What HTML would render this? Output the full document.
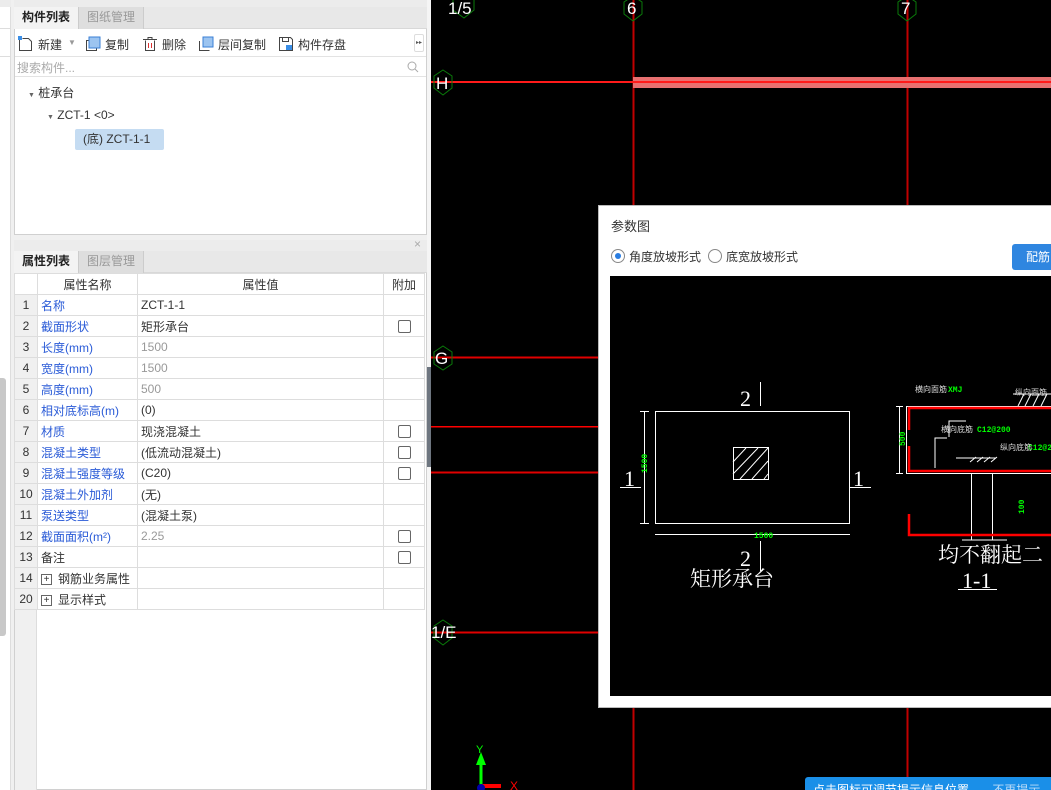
<!DOCTYPE html>
<html><head><meta charset="utf-8">
<style>
*{margin:0;padding:0;box-sizing:border-box}
body{width:1051px;height:790px;overflow:hidden;background:#f0f0f0;font-family:"Liberation Sans","Noto Sans CJK SC",sans-serif;font-size:12px;color:#333;position:relative}
.abs{position:absolute}
.tabs{position:absolute;left:14px;height:22px;width:413px;background:#e8e8e8;border-bottom:1px solid #d8d8d8}
.tab{position:absolute;top:0;height:22px;line-height:21px;text-align:center;font-size:12px}
.tab.on{background:#f3f3f3;font-weight:bold;color:#222;border-right:1px solid #ccc}
.tab.off{background:#dedede;color:#999;border-right:1px solid #ccc}
table{border-collapse:collapse;position:absolute;left:14px;top:273px;width:411px;background:#fff}
td{border:1px solid #ddd;height:21px;padding:0 3px;font-size:12px;white-space:nowrap}
td.n{background:#f0f0f0;text-align:center;width:23px;padding:0;color:#333}
td.k{color:#2a5bd7;width:100px}
td.g{color:#999}
.cb{display:inline-block;width:13px;height:13px;border:1px solid #666;border-radius:2px;vertical-align:middle}
.pl{display:inline-block;width:11px;height:11px;border:1px solid #666;font-size:10px;line-height:9px;text-align:center;margin-right:6px;vertical-align:middle}
</style></head><body>
<div class="abs" style="left:0;top:0;width:11px;height:790px;background:#fff;border-right:1px solid #ddd"></div>
<div class="abs" style="left:0;top:0;width:11px;height:7px;background:#ececec"></div>
<div class="abs" style="left:0;top:28px;width:11px;height:1px;background:#ddd"></div>
<div class="abs" style="left:0;top:56px;width:11px;height:1px;background:#ddd"></div>
<div class="abs" style="left:0;top:378px;width:6px;height:258px;background:#c8c8c8;border-radius:0 3px 3px 0"></div>

<div class="abs" style="left:14px;top:0;width:413px;height:235px;background:#fff;border:1px solid #d0d0d0"></div>
<div class="abs" style="left:14px;top:0;width:413px;height:7px;background:#ececec"></div>
<div class="tabs" style="top:7px"><div class="tab on" style="left:0;width:65px">构件列表</div><div class="tab off" style="left:65px;width:65px">图纸管理</div></div>
<div class="abs" style="left:15px;top:30px;width:411px;height:27px;background:#fff;border-bottom:1px solid #e3e3e3;font-size:12px;color:#333">
 <svg class="abs" style="left:3px;top:6px" width="16" height="16"><path d="M1.5 3.5v11h12v-9l-3-3h-6" fill="none" stroke="#444"/><rect x="0" y="0" width="4" height="4" fill="#3a8ee6"/></svg>
 <span class="abs" style="left:23px;top:6px">新建</span><span class="abs" style="left:53px;top:8px;color:#999;font-size:8px">▼</span>
 <svg class="abs" style="left:70px;top:6px" width="16" height="16"><rect x="1.5" y="4.5" width="10" height="10" fill="none" stroke="#444"/><rect x="4" y="1" width="11" height="11" fill="#9cc4f0" stroke="#3a7fd6"/></svg>
 <span class="abs" style="left:90px;top:6px">复制</span>
 <svg class="abs" style="left:127px;top:6px" width="16" height="16"><path d="M3.5 4.5v10h9v-10M1 3.5h14M6 3.5v-2h4v2" fill="none" stroke="#444"/><path d="M6.5 7v5M9.5 7v5" stroke="#d33"/></svg>
 <span class="abs" style="left:147px;top:6px">删除</span>
 <svg class="abs" style="left:183px;top:6px" width="16" height="16"><path d="M1.5 5v9.5h10" fill="none" stroke="#444"/><rect x="5" y="1" width="10" height="10" fill="#9cc4f0" stroke="#3a7fd6"/></svg>
 <span class="abs" style="left:203px;top:6px">层间复制</span>
 <svg class="abs" style="left:263px;top:6px" width="16" height="16"><path d="M1.5 1.5h11l2 2v11h-13z M4.5 1.5v4h6v-4" fill="none" stroke="#444"/><rect x="8" y="9" width="6" height="5" fill="#3a8ee6"/></svg>
 <span class="abs" style="left:283px;top:6px">构件存盘</span>
 <div class="abs" style="left:399px;top:4px;width:10px;height:18px;border:1px solid #ddd;border-radius:2px;font-size:6px;color:#555;line-height:16px;text-align:center">▸▸</div>
</div>
<div class="abs" style="left:15px;top:58px;width:411px;height:19px;background:#fff;border-bottom:1px solid #e3e3e3;color:#aaa;padding:1px 2px">搜索构件...</div>
<svg class="abs" style="left:407px;top:61px" width="12" height="12"><circle cx="5" cy="5" r="4" fill="none" stroke="#aaa"/><path d="M8 8l3 3" stroke="#aaa"/></svg>
<div class="abs" style="left:28px;top:84px;font-size:12px"><span style="font-size:7px;color:#666">▼</span> 桩承台</div>
<div class="abs" style="left:47px;top:108px;font-size:12px"><span style="font-size:7px;color:#666">▼</span> ZCT-1 &lt;0&gt;</div>
<div class="abs" style="left:75px;top:129px;width:89px;height:21px;background:#c5dcf2;border-radius:2px;line-height:21px;padding-left:8px">(底) ZCT-1-1</div>

<div class="abs" style="left:14px;top:240px;width:413px;height:550px;background:#fff;border:1px solid #d0d0d0"></div>
<div class="abs" style="left:14px;top:240px;width:413px;height:11px;background:#ececec"></div>
<div class="abs" style="left:414px;top:237px;color:#aaa;font-size:12px">×</div>
<div class="tabs" style="top:251px"><div class="tab on" style="left:0;width:65px">属性列表</div><div class="tab off" style="left:65px;width:65px">图层管理</div></div>
<div class="abs" style="left:15px;top:294px;width:22px;height:496px;background:#f0f0f0;border-right:1px solid #ddd"></div>
<table>
<tr><td class="n" style="background:#fff"></td><td style="text-align:center">属性名称</td><td style="text-align:center;width:246px">属性值</td><td style="text-align:center;width:41px">附加</td></tr>
<tr><td class="n">1</td><td class="k">名称</td><td>ZCT-1-1</td><td></td></tr>
<tr><td class="n">2</td><td class="k">截面形状</td><td>矩形承台</td><td style="text-align:center"><span class="cb"></span></td></tr>
<tr><td class="n">3</td><td class="k">长度(mm)</td><td class="g">1500</td><td></td></tr>
<tr><td class="n">4</td><td class="k">宽度(mm)</td><td class="g">1500</td><td></td></tr>
<tr><td class="n">5</td><td class="k">高度(mm)</td><td class="g">500</td><td></td></tr>
<tr><td class="n">6</td><td class="k">相对底标高(m)</td><td>(0)</td><td></td></tr>
<tr><td class="n">7</td><td class="k">材质</td><td>现浇混凝土</td><td style="text-align:center"><span class="cb"></span></td></tr>
<tr><td class="n">8</td><td class="k">混凝土类型</td><td>(低流动混凝土)</td><td style="text-align:center"><span class="cb"></span></td></tr>
<tr><td class="n">9</td><td class="k">混凝土强度等级</td><td>(C20)</td><td style="text-align:center"><span class="cb"></span></td></tr>
<tr><td class="n">10</td><td class="k">混凝土外加剂</td><td>(无)</td><td></td></tr>
<tr><td class="n">11</td><td class="k">泵送类型</td><td>(混凝土泵)</td><td></td></tr>
<tr><td class="n">12</td><td class="k">截面面积(m²)</td><td class="g">2.25</td><td style="text-align:center"><span class="cb"></span></td></tr>
<tr><td class="n">13</td><td>备注</td><td></td><td style="text-align:center"><span class="cb"></span></td></tr>
<tr><td class="n">14</td><td><span class="pl">+</span>钢筋业务属性</td><td></td><td></td></tr>
<tr><td class="n">20</td><td><span class="pl">+</span>显示样式</td><td></td><td></td></tr>
</table>

<div class="abs" style="left:427px;top:0;width:4px;height:790px;background:#f5f5f5"></div>
<div class="abs" style="left:427px;top:367px;width:4px;height:100px;background:#6e7680"></div>

<svg class="abs" style="left:431px;top:0" width="620" height="790">
<rect width="620" height="790" fill="#000"/>
<rect x="201.5" y="0" width="2" height="790" fill="#c00000"/>
<rect x="475.5" y="0" width="2" height="790" fill="#c00000"/>
<rect x="202" y="77" width="418" height="11" fill="#e87070"/>
<rect x="0" y="81" width="620" height="2" fill="#ff1a1a"/>
<rect x="0" y="356.5" width="620" height="2" fill="#e00000"/>
<rect x="0" y="426" width="620" height="1.5" fill="#ff0000"/>
<rect x="0" y="471.5" width="620" height="2" fill="#e00000"/>
<rect x="0" y="631.5" width="620" height="2" fill="#e00000"/>
<g fill="none" stroke="#0a7a0a">
<polygon points="33,-10 43,-3 43,10 33,18 22,10 22,-3"/>
<polygon points="202,-4 211,2 211,14 202,21 193,14 193,2"/>
<polygon points="476,-4 485,2 485,14 476,21 467,14 467,2"/>
<polygon points="12,70 21,76 21,88 12,95 3,88 3,76"/>
<polygon points="12,346 21,352 21,364 12,370 3,364 3,352"/>
<polygon points="12,620 21,626 21,638 12,645 3,638 3,626"/>
</g>
<g fill="#fff" font-family="Liberation Sans,sans-serif" font-size="17">
<text x="17" y="14">1/5</text><text x="196" y="14">6</text><text x="470" y="14">7</text>
<text x="5" y="89">H</text><text x="4" y="364">G</text><text x="0" y="638">1/E</text>
</g>
<line x1="50" y1="786" x2="50" y2="760" stroke="#0f0" stroke-width="3"/><polygon points="45,765 55,765 50,752" fill="#0f0"/>
<text x="45" y="753" fill="#0f0" font-size="11">Y</text>
<line x1="50" y1="786" x2="70" y2="786" stroke="#f00" stroke-width="4"/><text x="79" y="790" fill="#f00" font-size="12">X</text>
<circle cx="50" cy="788" r="4" fill="#00a"/>
</svg>

<div class="abs" style="left:598px;top:205px;width:453px;height:503px;background:#fff;border:1px solid #bbb;border-right:none"></div>
<div class="abs" style="left:611px;top:216px;font-size:13px;color:#333">参数图</div>
<div class="abs" style="left:611px;top:249px;width:14px;height:14px;border:1px solid #888;border-radius:50%"></div>
<div class="abs" style="left:615px;top:253px;width:6px;height:6px;background:#2a7de1;border-radius:50%"></div>
<div class="abs" style="left:629px;top:248px;font-size:12px">角度放坡形式</div>
<div class="abs" style="left:708px;top:249px;width:14px;height:14px;border:1px solid #888;border-radius:50%"></div>
<div class="abs" style="left:726px;top:248px;font-size:12px">底宽放坡形式</div>
<div class="abs" style="left:1012px;top:244px;width:45px;height:26px;background:#2f86e0;border-radius:3px;color:#fff;line-height:26px;padding-left:14px;font-size:12px">配筋</div>
<svg class="abs" style="left:610px;top:276px" width="441" height="420">
<rect width="441" height="420" fill="#000"/>
<g stroke="#fff" fill="none">
<rect x="45.5" y="135.5" width="194" height="112"/>
<rect x="123.5" y="171.5" width="35" height="32"/>
<path d="M123 186l13-14M123 198l25-26M130 203l28-31M142 203l16-18M154 203l4-5"/>
<line x1="150.5" y1="106" x2="150.5" y2="130"/><line x1="150.5" y1="265" x2="150.5" y2="295"/>
<line x1="10" y1="211.5" x2="31" y2="211.5"/><line x1="240" y1="211.5" x2="261" y2="211.5"/>
<line x1="34.5" y1="135" x2="34.5" y2="247"/><line x1="30" y1="135.5" x2="39" y2="135.5"/><line x1="30" y1="247.5" x2="39" y2="247.5"/>
<line x1="45" y1="258.5" x2="240" y2="258.5"/>
<rect x="296.5" y="130.5" width="160" height="67"/>
<line x1="289.5" y1="130" x2="289.5" y2="197"/><line x1="286" y1="130.5" x2="293" y2="130.5"/><line x1="286" y1="197.5" x2="293" y2="197.5"/>
<path d="M361.5 198v66M382.5 198v66M352 264h45"/>
<path d="M408 130l6-12M415 130l6-12M423 130l6-12M431 130l6-12M403 118h38"/>
<path d="M339 161v-16h17M325 192v-30h12"/>
<path d="M360 186l6-5M367 186l6-5M374 186l6-5M381 186l6-5M346 182h40"/>
<line x1="348" y1="313.5" x2="387" y2="313.5"/>
</g>
<g stroke="#f00" stroke-width="2.5" fill="none">
<path d="M299 154v-22h142M299 170v25h142"/>
<path d="M299 238v21h142"/>
</g>
<g fill="#0f0" font-family="Liberation Mono,monospace" font-size="8" font-weight="bold">
<text x="144" y="262">1500</text>
<text x="0" y="0" transform="translate(37,197) rotate(-90)">1500</text>
<text x="0" y="0" transform="translate(295,170) rotate(-90)">500</text>
<text x="0" y="0" transform="translate(414,238) rotate(-90)">100</text>
<text x="338" y="116">XMJ</text><text x="367" y="156">C12@200</text><text x="418" y="174">C12@2</text><text x="442" y="119">YM</text>
</g>
<g fill="#ddd" font-size="8" font-family="Noto Sans CJK SC,sans-serif">
<text x="305" y="116">横向面筋</text><text x="405" y="119">纵向面筋</text><text x="331" y="156">横向底筋</text><text x="390" y="174">纵向底筋</text>
</g>
<g fill="#fff" font-family="Liberation Serif,Noto Serif CJK SC,serif" font-size="22">
<text x="130" y="130">2</text><text x="130" y="290">2</text><text x="14" y="210">1</text><text x="243" y="210">1</text>
<text x="352" y="312">1-1</text>
</g>
<text x="80" y="310" fill="#fff" font-size="21" font-family="Noto Serif CJK SC,serif">矩形承台</text>
<text x="328" y="286" fill="#fff" font-size="21" font-family="Noto Serif CJK SC,serif">均不翻起二</text>
</svg>

<div class="abs" style="left:805px;top:777px;width:246px;height:13px;background:#1a8fe8;border-radius:3px 0 0 0;color:#fff;font-size:12px;line-height:26px;padding-left:8px;overflow:hidden;white-space:nowrap">点击图标可调节提示信息位置 <span style="color:#bcdcf8;margin-left:20px">不再提示</span></div>
</body></html>
